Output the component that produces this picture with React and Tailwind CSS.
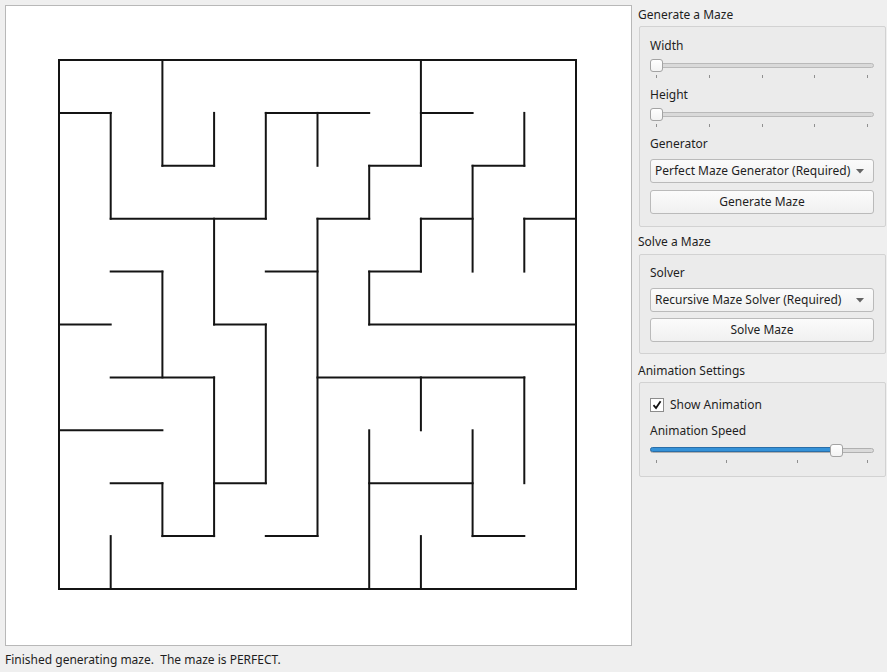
import { useState } from "react";

// walls of the 10x10 maze, in grid units
const hWalls = [
  [0, 0, 10],
  [1, 0, 1], [1, 4, 6], [1, 7, 8],
  [2, 2, 3], [2, 6, 7], [2, 8, 9],
  [3, 1, 4], [3, 5, 6], [3, 7, 8], [3, 9, 10],
  [4, 1, 2], [4, 4, 5], [4, 6, 7],
  [5, 0, 1], [5, 3, 4], [5, 6, 10],
  [6, 1, 3], [6, 5, 9],
  [7, 0, 2],
  [8, 1, 2], [8, 3, 4], [8, 6, 8],
  [9, 2, 3], [9, 4, 5], [9, 8, 9],
  [10, 0, 10],
];

const vWalls = [
  [0, 0, 10],
  [1, 1, 3], [1, 9, 10],
  [2, 0, 2], [2, 4, 6], [2, 8, 9],
  [3, 1, 2], [3, 3, 5], [3, 6, 9],
  [4, 1, 3], [4, 5, 8],
  [5, 1, 2], [5, 3, 9],
  [6, 2, 3], [6, 4, 5], [6, 7, 10],
  [7, 0, 2], [7, 3, 4], [7, 6, 7], [7, 9, 10],
  [8, 2, 4], [8, 7, 9],
  [9, 1, 2], [9, 3, 4], [9, 6, 8],
  [10, 0, 10],
];

const gx = (i) => 59 + i * 51.7;
const gy = (j) => 60 + j * 52.9;

const Maze = () => (
  <svg width="625" height="639" viewBox="6 6 625 639" className="block">
    <g stroke="#141414" strokeWidth="2" strokeLinecap="square">
      {hWalls.map(([r, a, b]) => (
        <line key={`h${r}-${a}`} x1={gx(a)} y1={gy(r)} x2={gx(b)} y2={gy(r)} />
      ))}
      {vWalls.map(([c, a, b]) => (
        <line key={`v${c}-${a}`} x1={gx(c)} y1={gy(a)} x2={gx(c)} y2={gy(b)} />
      ))}
    </g>
  </svg>
);

const Slider = ({ value, ticks, filled }) => {
  return (
    <div className="h-[31px] pt-[4px]">
      <div className="relative h-[14px] flex items-center">
        <div
          className={`w-full h-[5px] rounded-full border ${
            filled ? "border-[#b0b0b0] bg-[#dadada]" : "border-[#b9b9b9] bg-[#d9d9d9]"
          }`}
        />
        {filled && (
          <div
            className="absolute left-0 top-[4px] h-[5px] rounded-full border border-[#2a6ea8] bg-[#3592d8]"
            style={{ width: `${6 + value * 212}px` }}
          />
        )}
        <div
          className="absolute top-[1px] w-[13px] h-[13px] rounded-[3px] border border-[#a3a3a3] bg-gradient-to-b from-white to-[#f3f3f3]"
          style={{ left: `${value * 211}px` }}
        />
      </div>
      <div className="flex justify-between px-[6px] mt-[3px]">
        {Array.from({ length: ticks }).map((_, i) => (
          <span key={i} className="w-px h-[3px] bg-[#8f8f8f]" />
        ))}
      </div>
    </div>
  );
};

const Combo = ({ label }) => (
  <div className="h-[24px] flex items-center justify-between pl-[4px] pr-[9px] rounded-[3px] border border-[#bababa] bg-gradient-to-b from-[#fbfbfb] to-[#f0f0f0]">
    <span>{label}</span>
    <svg width="8" height="5" viewBox="0 0 8 5">
      <path d="M0 0 L8 0 L4 4.5 Z" fill="#646464" />
    </svg>
  </div>
);

const Button = ({ children }) => (
  <div className="h-[24px] flex items-center justify-center rounded-[3px] border border-[#bababa] bg-gradient-to-b from-[#fbfbfb] to-[#f0f0f0]">
    {children}
  </div>
);

// text sits one pixel lower than the line box centre
const Label = ({ children }) => <div className="h-[18px] leading-[20px]">{children}</div>;

export default function App() {
  const [anim, setAnim] = useState(true);

  return (
    <div
      className="w-[887px] h-[672px] bg-[#efefef] text-[12px] text-[#1e1e1e] overflow-hidden"
      style={{ fontFamily: '"Noto Sans", "Open Sans", sans-serif' }}
    >
      <div className="flex">
        {/* maze canvas */}
        <div className="ml-[5px] mt-[5px] w-[627px] h-[641px] border border-[#b8b8b8] bg-white">
          <Maze />
        </div>

        {/* settings panel */}
        <div className="w-[255px] pl-[6px]">
          <div className="h-[26px] pt-[5px]">
            <Label>Generate a Maze</Label>
          </div>
          <div className="ml-[1px] w-[247px] border border-[#d2d2d2] rounded-[2px] bg-[#ebebeb] pl-[10px] pr-[11px] pt-[9px] pb-[12px]">
            <Label>Width</Label>
            <Slider value={0} ticks={5} />
            <Label>Height</Label>
            <Slider value={0} ticks={5} />
            <Label>Generator</Label>
            <div className="mt-[7px]">
              <Combo label="Perfect Maze Generator (Required)" />
            </div>
            <div className="mt-[7px]">
              <Button>Generate Maze</Button>
            </div>
          </div>

          <div className="h-[27px] pt-[5px]">
            <Label>Solve a Maze</Label>
          </div>
          <div className="ml-[1px] w-[247px] border border-[#d2d2d2] rounded-[2px] bg-[#ebebeb] pl-[10px] pr-[11px] pt-[8px] pb-[11px]">
            <Label>Solver</Label>
            <div className="mt-[7px]">
              <Combo label="Recursive Maze Solver (Required)" />
            </div>
            <div className="mt-[6px]">
              <Button>Solve Maze</Button>
            </div>
          </div>

          <div className="h-[28px] pt-[7px]">
            <Label>Animation Settings</Label>
          </div>
          <div className="ml-[1px] w-[247px] border border-[#d2d2d2] rounded-[2px] bg-[#ebebeb] pl-[10px] pr-[11px] pt-[13px] pb-[6px]">
            <div className="h-[18px] flex items-center gap-[6px]" onClick={() => setAnim(!anim)}>
              <span className="w-[14px] h-[14px] border border-[#8c8c8c] bg-white flex items-center justify-center">
                {anim && (
                  <svg width="10" height="10" viewBox="0 0 10 10">
                    <path d="M1.5 5.2 L4 8 L8.6 1.2" fill="none" stroke="#111" strokeWidth="1.8" />
                  </svg>
                )}
              </span>
              <span className="leading-[20px]">Show Animation</span>
            </div>
            <div className="mt-[7px]">
              <Label>Animation Speed</Label>
            </div>
            <Slider value={0.853} ticks={4} filled />
          </div>
        </div>
      </div>

      {/* status bar */}
      <div className="h-[26px] pl-[5px] flex items-center leading-[20px] pt-[1px]">
        Finished generating maze.&nbsp; The maze is PERFECT.
      </div>
    </div>
  );
}
